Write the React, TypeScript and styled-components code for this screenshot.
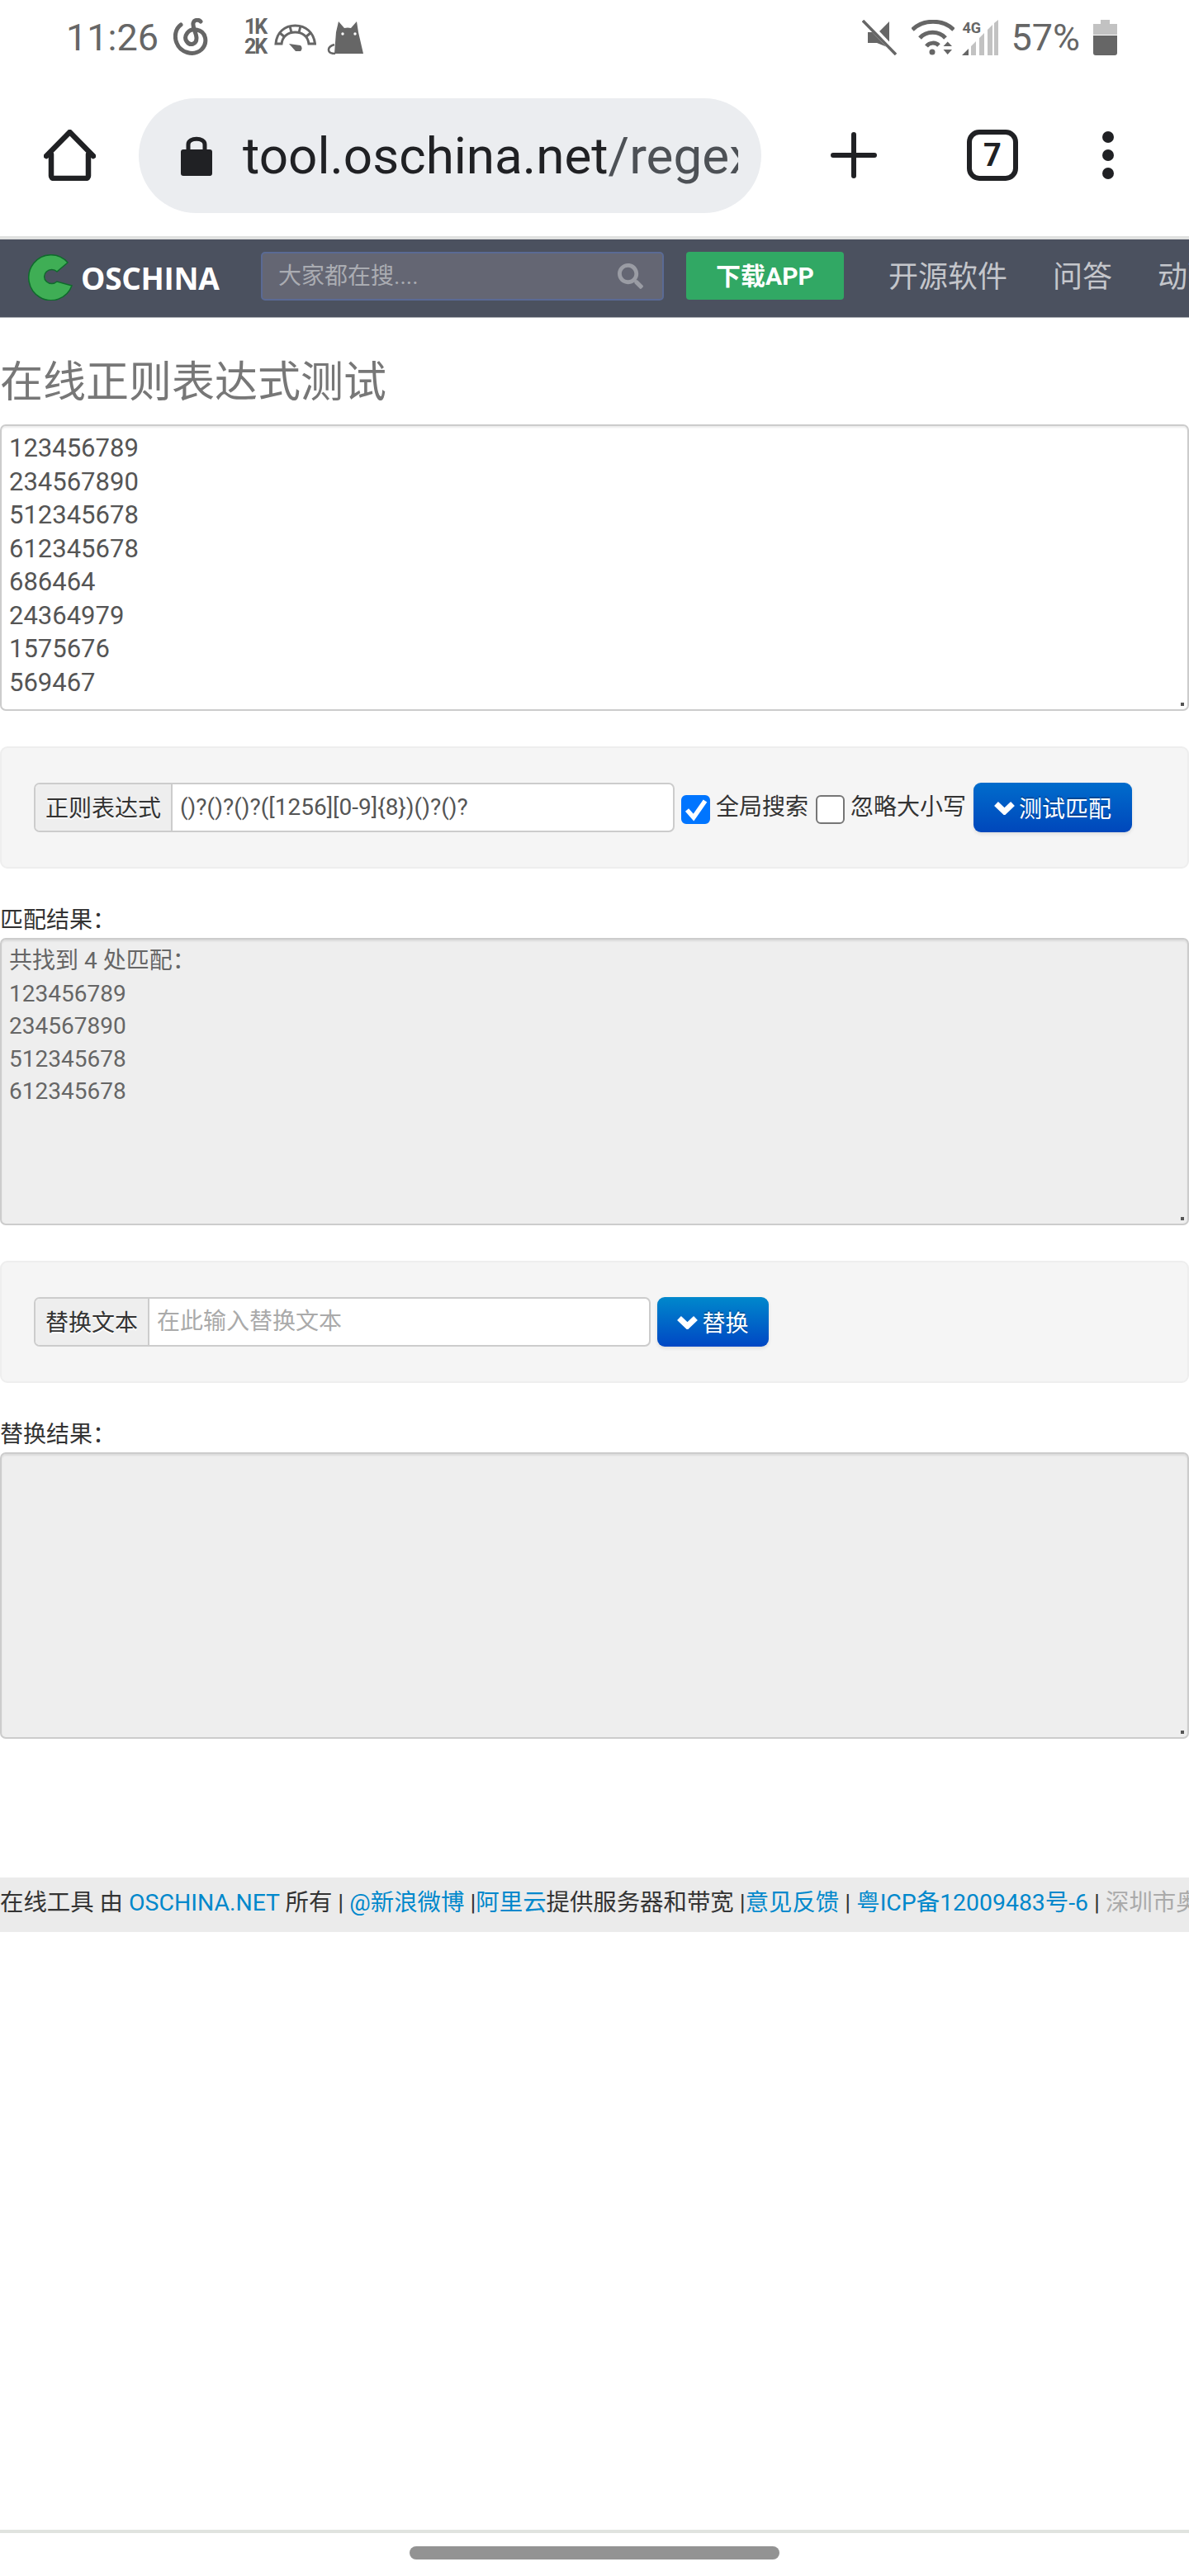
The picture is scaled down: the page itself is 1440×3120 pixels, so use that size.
import React from 'react';
import styled, { createGlobalStyle } from 'styled-components';
import { FaSearch } from 'react-icons/fa';

const FONT = 'Roboto, "Noto Sans CJK SC", sans-serif';

const GlobalStyle = createGlobalStyle`
  html, body {
    margin: 0;
    padding: 0;
    background: #fff;
  }
  * {
    box-sizing: border-box;
  }
`;

const Chevron = () => (
  <svg width="25" height="18" viewBox="0 0 25 18" fill="none" stroke="#fff" strokeWidth="7">
    <path d="M2.500 4.500L12.500 14 22.500 4.500" />
  </svg>
);

const App = () => (
  <Page>
    <GlobalStyle />
    <StatusBar>
      <StatusGroup>
        <Time>11:26</Time>
        <Icon $ml={20} width="42" height="46" viewBox="0 0 42 46" fill="none" stroke="#666" strokeWidth="5" strokeLinecap="round">
          <path d="M9 8C2 13 1 23 4 30c4 11 20 17 30 8 8-8 6-22-6-24-10-2-16 8-12 14 4 6 12 4 12-4 0-6-5-12-4-18 1-4 6-5 9-2" />
        </Icon>
        <Speed>
          <span>1K</span>
          <span>2K</span>
        </Speed>
        <Icon $ml={11} width="51" height="33" viewBox="0 0 51 33" fill="none" stroke="#666" strokeWidth="3">
          <path d="M2 24C3 10 13 2 25.500 2S48 10 49.500 24H42C41 15 34 10 25.500 10S10 15 9 24Z" />
          <path d="M7 11l6 5M19 2.500l2 8M32 2.500l-2 8M44 11l-6 5" />
          <path d="M18 24l14 2a4 4 0 0 1-6 7Z" fill="#666" stroke="none" />
        </Icon>
        <Icon $ml={13} width="44" height="41" viewBox="0 0 44 41">
          <path d="M14 1l7 8q4-1 8 0l7-8 2 13 6 26H9l2-26Z" fill="#666" />
          <path d="M9 29c-10 3-9 11 1 11" fill="none" stroke="#666" strokeWidth="2.500" />
          <circle cx="19" cy="16" r="1.700" fill="#fff" />
          <circle cx="34" cy="16" r="1.700" fill="#fff" />
        </Icon>
      </StatusGroup>
      <StatusGroup>
        <Icon width="43" height="43" viewBox="0 0 43 43">
          <path d="M33 2v32L18 28H7V15h13Z" fill="#666" />
          <path d="M3 0l40 42" stroke="#fff" strokeWidth="7" />
          <path d="M1 1l40 41" stroke="#666" strokeWidth="3.500" />
        </Icon>
        <Icon $ml={17} width="52" height="43" viewBox="0 0 52 43" fill="none" stroke="#666" strokeWidth="5">
          <path d="M1 12C14 -1 38 -1 51 12" />
          <path d="M10 22C18 13 33 13 41 22" />
          <path d="M18 32C22 27 29 27 33 31" />
          <circle cx="25" cy="39" r="3.500" fill="#666" stroke="none" />
          <path d="M38.500 32h10.500l-5.300-5.500ZM38.500 36h10.500l-5.300 6Z" fill="#666" stroke="none" />
        </Icon>
        <SignalBox>
          <FourG>4G</FourG>
          <Icon width="44" height="43" viewBox="0 0 44 43">
            <path d="M0 43l8-8v8Z" fill="#666" />
            <path d="M11 32l6-6v17h-6ZM21 22l6-6v27h-6ZM31 12l6-6v37h-6ZM39 4l5-4v43h-5Z" fill="#c2c2c2" />
          </Icon>
        </SignalBox>
        <Battery>57%</Battery>
        <Icon $ml={16} $mr={87} width="29" height="43" viewBox="0 0 29 43">
          <path d="M9 0h11v5h9v13H0V5h9Z" fill="#c2c2c2" />
          <path d="M0 19h29v21a3 3 0 0 1-3 3H3a3 3 0 0 1-3-3Z" fill="#666" />
        </Icon>
      </StatusGroup>
    </StatusBar>

    <Toolbar>
      <Icon width="63" height="62" viewBox="0 0 63 62" fill="none" stroke="#202124" strokeWidth="6.500" strokeLinecap="round" strokeLinejoin="round">
        <path d="M3 32L31.500 3 60 32M9 30v26a3 3 0 0 0 3 3h39a3 3 0 0 0 3-3V30" />
      </Icon>
      <AddressBar>
        <Icon width="38" height="49" viewBox="0 0 38 49">
          <rect y="17" width="38" height="32" rx="3" fill="#202124" />
          <path d="M9 19V11C9 2 29 2 29 11v8" fill="none" stroke="#202124" strokeWidth="5" />
        </Icon>
        <UrlClip>
          <Host>tool.oschina.net</Host>
          <UrlPath>/regex</UrlPath>
        </UrlClip>
      </AddressBar>
      <Icon $ml={84} width="56" height="56" viewBox="0 0 56 56" stroke="#202124" strokeWidth="6" strokeLinecap="round">
        <path d="M28 3v50M3 28h50" />
      </Icon>
      <TabCount>7</TabCount>
      <Icon $ml={102} width="14" height="58" viewBox="0 0 14 58" fill="#202124">
        <circle cx="7" cy="7" r="7" />
        <circle cx="7" cy="29" r="7" />
        <circle cx="7" cy="51" r="7" />
      </Icon>
    </Toolbar>

    <NavBar>
      <Logo>
        <svg width="54" height="56" viewBox="0 0 54 56">
          <path d="M48 10A27 27.500 0 1 0 53 38L35 33A9 8.500 0 1 1 35 21Z" fill="#3fae55" stroke="#0f6b2c" strokeWidth="1.500" />
        </svg>
        <LogoText>OSCHINA</LogoText>
      </Logo>
      <SearchBox>
        <SearchInput placeholder="大家都在搜...." readOnly />
        <FaSearch size={31} color="#9a9ca4" />
      </SearchBox>
      <DownloadButton>下载APP</DownloadButton>
      <NavLinks>
        <NavLink>开源软件</NavLink>
        <NavLink>问答</NavLink>
        <NavLink>动弹</NavLink>
      </NavLinks>
    </NavBar>

    <Main>
      <Title>在线正则表达式测试</Title>
      <TextBox
        $height={347}
        readOnly
        defaultValue={'123456789\n234567890\n512345678\n612345678\n686464\n24364979\n1575676\n569467'}
      />

      <Panel>
        <InputGroup $width={776}>
          <Addon>正则表达式</Addon>
          <GroupInput readOnly defaultValue="()?()?()?([1256][0-9]{8})()?()?" />
        </InputGroup>
        <CheckBox $ml={8} $on>
          <svg width="31" height="31" viewBox="0 0 31 31" fill="none" stroke="#fff" strokeWidth="5.500">
            <path d="M5 16l8 9L27 5" />
          </svg>
        </CheckBox>
        <CheckLabel>全局搜索</CheckLabel>
        <CheckBox $ml={9} />
        <CheckLabel>忽略大小写</CheckLabel>
        <ActionButton $ml={9} $width={192} $from="#006ccc" $to="#0047bb">
          <Chevron />
          测试匹配
        </ActionButton>
      </Panel>

      <SectionLabel>匹配结果：</SectionLabel>
      <TextBox
        $height={348}
        $muted
        readOnly
        defaultValue={'共找到 4 处匹配：\n123456789\n234567890\n512345678\n612345678'}
      />

      <Panel>
        <InputGroup $width={747}>
          <Addon>替换文本</Addon>
          <GroupInput readOnly placeholder="在此输入替换文本" />
        </InputGroup>
        <ActionButton $ml={8} $width={135} $from="#0088cc" $to="#0047c4">
          <Chevron />
          替换
        </ActionButton>
      </Panel>

      <SectionLabel>替换结果：</SectionLabel>
      <TextBox $height={347} $muted readOnly />

      <Footer>
        在线工具 由 <FooterLink>OSCHINA.NET</FooterLink> 所有 | <FooterLink>@新浪微博</FooterLink> |
        <FooterLink>阿里云</FooterLink>提供服务器和带宽 |<FooterLink>意见反馈</FooterLink> |{' '}
        <FooterLink>粤ICP备12009483号-6</FooterLink> | <FooterNote>深圳市奥思网络科技有限公司版权所有</FooterNote>
      </Footer>
    </Main>

    <GestureBar>
      <GestureHandle />
    </GestureBar>
  </Page>
);

const Page = styled.div`
  width: 1440px;
  height: 3120px;
  display: flex;
  flex-direction: column;
  overflow: hidden;
  background: #fff;
  font-family: ${FONT};
`;

const StatusBar = styled.div`
  height: 90px;
  padding: 0 0 0 80px;
  display: flex;
  justify-content: space-between;
  align-items: center;
  color: #666;
`;

const StatusGroup = styled.div`
  display: flex;
  align-items: center;
`;

const Time = styled.span`
  font-size: 45px;
  width: 110px;
`;

const Icon = styled.svg<{ $ml?: number; $mr?: number }>`
  display: block;
  flex: none;
  margin-left: ${props => props.$ml || 0}px;
  margin-right: ${props => props.$mr || 0}px;
`;

const Speed = styled.div`
  margin-left: 44px;
  width: 25px;
  display: flex;
  flex-direction: column;
  font-size: 25px;
  font-weight: 700;
  line-height: 24px;
  letter-spacing: -2px;
  white-space: nowrap;
`;

const SignalBox = styled.div`
  margin-left: 9px;
  display: flex;
  align-items: flex-start;
`;

const FourG = styled.span`
  width: 0;
  font-size: 18px;
  font-weight: 700;
  line-height: 20px;
  letter-spacing: 0;
  white-space: nowrap;
`;

const Battery = styled.span`
  margin-left: 15px;
  font-size: 45px;
`;

const Toolbar = styled.div`
  height: 196px;
  padding-left: 53px;
  display: flex;
  align-items: center;
`;

const AddressBar = styled.div`
  width: 754px;
  height: 139px;
  margin-left: 52px;
  padding: 0 28px 0 51px;
  display: flex;
  align-items: center;
  gap: 37px;
  border-radius: 70px;
  background: #ebedf0;
`;

const UrlClip = styled.div`
  flex: 1;
  padding-top: 2px;
  overflow: hidden;
  white-space: nowrap;
  font-size: 62px;
  line-height: 80px;
`;

const Host = styled.span`
  color: #202124;
`;

const UrlPath = styled.span`
  color: #4d5156;
`;

const TabCount = styled.div`
  width: 62px;
  height: 62px;
  margin-left: 109px;
  display: flex;
  align-items: center;
  justify-content: center;
  border: 6px solid #202124;
  border-radius: 15px;
  color: #202124;
  font-size: 38px;
  font-weight: 700;
`;

const NavBar = styled.div`
  height: 99px;
  padding-left: 34px;
  display: flex;
  align-items: flex-start;
  border-top: 4px solid #e0e1e0;
  border-bottom: 1px solid #a9acb3;
  background: #4b515f;
  overflow: hidden;
  white-space: nowrap;
`;

const Logo = styled.div`
  width: 233px;
  height: 92px;
  flex: none;
  display: flex;
  align-items: center;
  gap: 10px;
`;

const LogoText = styled.span`
  color: #fff;
  font-family: "Open Sans", sans-serif;
  font-size: 37px;
  font-weight: 700;
  letter-spacing: -0.3px;
`;

const SearchBox = styled.div`
  width: 488px;
  height: 59px;
  flex: none;
  margin: 15px 0 0 49px;
  padding: 0 23px 0 17px;
  display: flex;
  align-items: center;
  border: 2px solid #5a6a94;
  border-radius: 5px;
  background: #646673;
`;

const SearchInput = styled.input`
  flex: 1;
  min-width: 0;
  border: none;
  outline: none;
  background: transparent;
  font-family: ${FONT};
  font-size: 28px;
  color: #fff;

  &::placeholder {
    color: #aaacb2;
    opacity: 1;
  }
`;

const DownloadButton = styled.div`
  width: 191px;
  height: 58px;
  flex: none;
  margin: 15px 0 0 27px;
  padding-bottom: 4px;
  display: flex;
  align-items: center;
  justify-content: center;
  border-radius: 4px;
  background: #31a864;
  color: #fff;
  font-size: 30px;
  font-weight: 700;
`;

const NavLinks = styled.div`
  margin: 0 0 0 54px;
  height: 84px;
  display: flex;
  align-items: center;
  gap: 55px;
`;

const NavLink = styled.span`
  color: #c4c6cb;
  font-size: 36px;
`;

const Main = styled.main`
  flex: 1;
  min-height: 0;
  color: #333;
  font-size: 28px;
`;

const Title = styled.h1`
  margin: 42px 0 13px;
  font-size: 52px;
  font-weight: 400;
  line-height: 74px;
  color: #777;
`;

const TextBox = styled.textarea<{ $height: number; $muted?: boolean }>`
  display: block;
  width: 100%;
  height: ${props => props.$height}px;
  margin: 0;
  padding: ${props => (props.$muted ? '6px' : '7px')} 9px 0;
  border: 2px solid #ccc;
  border-radius: 7px;
  outline: none;
  background: ${props => (props.$muted ? '#eee' : '#fff')};
  box-shadow: inset 0 2px 2px rgba(0, 0, 0, 0.075);
  color: ${props => (props.$muted ? '#666' : '#555')};
  font-family: ${FONT};
  font-size: ${props => (props.$muted ? '28px' : '31px')};
  line-height: ${props => (props.$muted ? '39.600px' : '40.500px')};

  &::-webkit-resizer {
    background: linear-gradient(#555, #555) no-repeat right 4px bottom 4px / 4px 4px;
  }
`;

const Panel = styled.section`
  height: 148px;
  margin-top: 43px;
  padding-left: 39px;
  display: flex;
  align-items: center;
  border: 2px solid #eee;
  border-radius: 9px;
  background: #f5f5f5;
`;

const InputGroup = styled.div<{ $width: number }>`
  width: ${props => props.$width}px;
  height: 60px;
  flex: none;
  display: flex;
  border: 2px solid #ccc;
  border-radius: 7px;
  background: #fff;
  overflow: hidden;
`;

const Addon = styled.span`
  flex: none;
  padding: 0 12px 2px;
  display: flex;
  align-items: center;
  border-right: 2px solid #ccc;
  background: #eee;
  color: #333;
  text-shadow: 0 2px 0 #fff;
`;

const GroupInput = styled.input`
  flex: 1;
  min-width: 0;
  padding: 0 9px 2px;
  border: none;
  outline: none;
  background: transparent;
  color: #555;
  font-family: ${FONT};
  font-size: 28px;

  &::placeholder {
    color: #aaa;
    opacity: 1;
  }
`;

const CheckBox = styled.span<{ $ml: number; $on?: boolean }>`
  width: 35px;
  height: 35px;
  flex: none;
  margin: 5px 0 0 ${props => props.$ml}px;
  display: flex;
  align-items: center;
  justify-content: center;
  border: 2px solid ${props => (props.$on ? '#0075ff' : '#767676')};
  border-radius: 6px;
  background: ${props => (props.$on ? '#0075ff' : '#fff')};
`;

const CheckLabel = styled.span`
  margin: 0 0 6px 7px;
  color: #333;
  white-space: nowrap;
`;

const ActionButton = styled.div<{ $ml: number; $width: number; $from: string; $to: string }>`
  width: ${props => props.$width}px;
  height: 60px;
  flex: none;
  margin-left: ${props => props.$ml}px;
  display: flex;
  align-items: center;
  justify-content: center;
  gap: 5px;
  border-radius: 9px;
  background: linear-gradient(${props => props.$from}, ${props => props.$to});
  box-shadow: 0 2px 4px rgba(0, 0, 0, 0.1);
  color: #fff;
  text-shadow: 0 -2px 0 rgba(0, 0, 0, 0.25);
`;

const SectionLabel = styled.div`
  height: 40px;
  margin: 43px 0 1px;
  line-height: 40px;
  color: #333;
`;

const Footer = styled.footer`
  height: 66px;
  margin-top: 168px;
  background: #ebebeb;
  font-size: 28.400px;
  line-height: 62px;
  white-space: nowrap;
  overflow: hidden;
  color: #333;
`;

const FooterLink = styled.span`
  color: #0088cc;
`;

const FooterNote = styled.span`
  color: #aaa;
`;

const GestureBar = styled.div`
  height: 56px;
  flex: none;
  padding-top: 16px;
  display: flex;
  justify-content: center;
  border-top: 4px solid #e0e3df;
`;

const GestureHandle = styled.div`
  width: 448px;
  height: 16px;
  border-radius: 8px;
  background: #939393;
`;

export default App;
